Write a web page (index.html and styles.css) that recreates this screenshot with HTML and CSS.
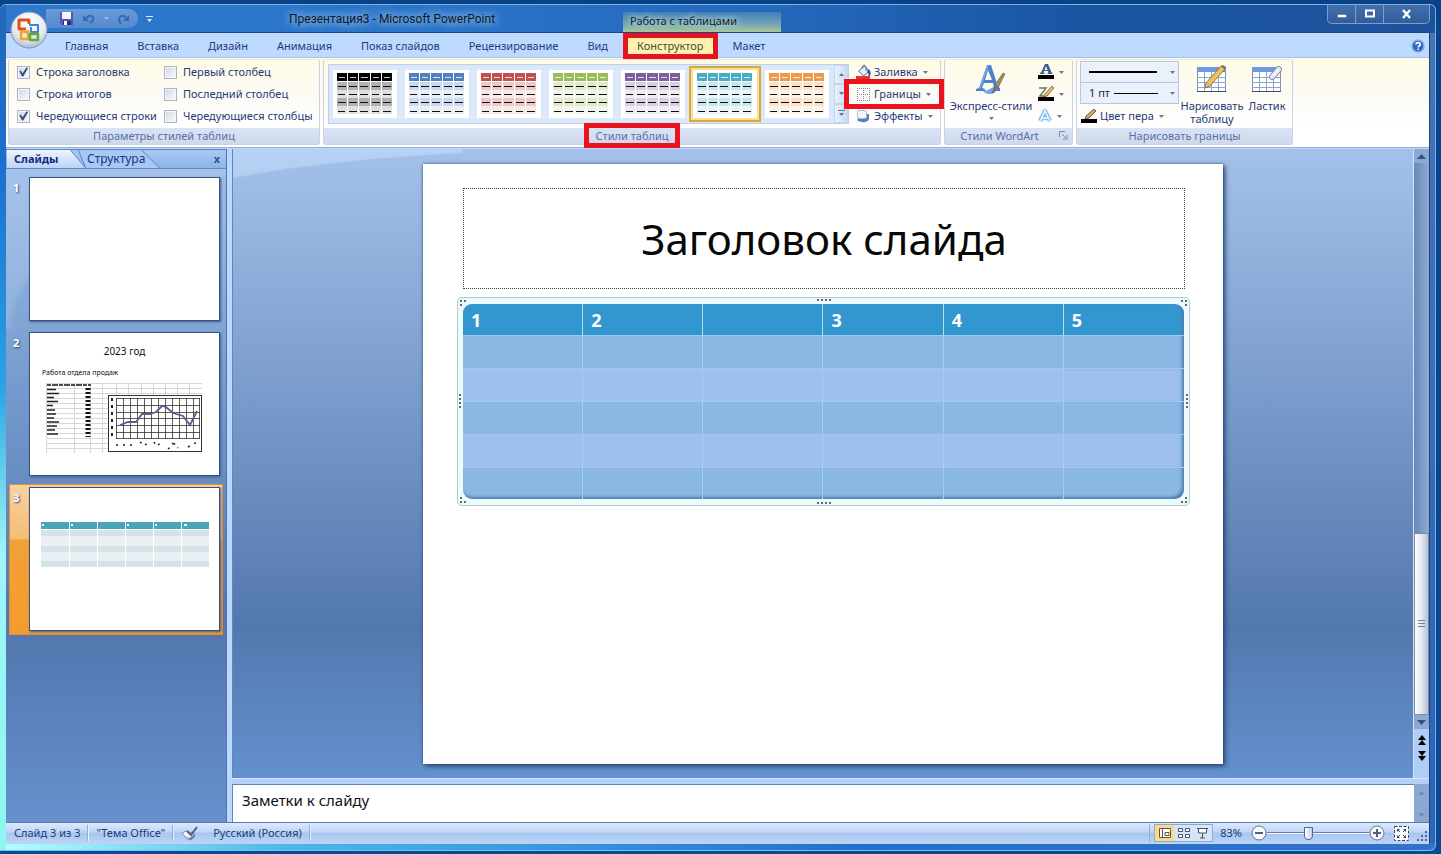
FILE: index.html
```html
<!DOCTYPE html>
<html lang="ru">
<head>
<meta charset="utf-8">
<title>Презентация3 - Microsoft PowerPoint</title>
<link rel="stylesheet" href="styles.css">
</head>
<body>
<svg class="defs" aria-hidden="true">
  <symbol id="table-style" viewBox="0 0 64 48">
    <g fill="currentColor">
      <path d="M4 3h10v8H4zM15 3h10v8H15zM26 3h11v8H26zM38 3h10v8H38zM49 3h10v8H49z"/>
      <path opacity=".3" d="M4 12h10v8H4zM15 12h10v8H15zM26 12h11v8H26zM38 12h10v8H38zM49 12h10v8H49zM4 28h10v8H4zM15 28h10v8H15zM26 28h11v8H26zM38 28h10v8H38zM49 28h10v8H49z"/>
      <path opacity=".12" d="M4 20h10v8H4zM15 20h10v8H15zM26 20h11v8H26zM38 20h10v8H38zM49 20h10v8H49zM4 36h10v8H4zM15 36h10v8H15zM26 36h11v8H26zM38 36h10v8H38zM49 36h10v8H49z"/>
    </g>
    <path stroke="#fff" stroke-opacity=".8" d="M6 7.500h6M17 7.500h6M28 7.500h7M40 7.500h6M51 7.500h6"/>
    <path stroke="#111" d="M5 16.500h8M16 16.500h8M27 16.500h8M39 16.500h8M50 16.500h8M5 24.500h7M16 24.500h8M27 24.500h8M39 24.500h7M50 24.500h8M5 32.500h8M16 32.500h8M27 32.500h8M39 32.500h8M50 32.500h8M5 41.500h7M16 41.500h8M27 41.500h8M39 41.500h7M50 41.500h8"/>
  </symbol>
  <symbol id="caret" viewBox="0 0 5 3"><path fill="currentColor" d="M0 0h5L2.500 3z"/></symbol>
  <symbol id="sheet" viewBox="0 0 32 32">
    <rect x="1.500" y="3.500" width="28" height="24" fill="#fff" stroke="#7c93b8"/>
    <path fill="#6c9be0" d="M1 3h29v5H1z"/>
    <path stroke="#8fa6cc" fill="none" d="M8.500 8v19M15.500 8v19M22.500 8v19M1 13.500h29M1 18.500h29M1 23.500h29"/>
    <path stroke="#3a4c70" d="M1 27.500h29"/>
  </symbol>
</svg>

<div class="window">
  <header class="titlebar">
    <div class="quick">
      <button class="tool" aria-label="Сохранить"><svg width="15" height="15" viewBox="0 0 15 15"><path fill="#5a55b5" d="M1 1h13v13H3l-2-2z"/><path fill="#f4f6ff" d="M3 1h9v7H3z"/><path fill="#2d2a80" d="M4 10h8v4H4z"/><path fill="#fff" d="M5 10h3v4H5z"/></svg></button>
      <button class="tool undo" aria-label="Отменить"><svg width="14" height="12" viewBox="0 0 14 12"><path fill="none" stroke="#3468bc" stroke-width="2" d="M3 6l4-3c4-1 5 2 4 4-1 2-2 2-3 3"/><path fill="#3468bc" d="M1 2v6h6z"/></svg></button>
      <svg class="dim" width="5" height="3"><use href="#caret"/></svg>
      <button class="tool redo" aria-label="Повторить"><svg width="14" height="12" viewBox="0 0 14 12"><path fill="none" stroke="#3468bc" stroke-width="2" d="M4 11c-4-5-1-9 3-8l3 3"/><path fill="#3468bc" d="M12 2v6H6z"/></svg></button>
    </div>
    <button class="tool more" aria-label="Настройка панели"><svg width="7" height="6" viewBox="0 0 7 6"><path fill="#dfeafb" d="M0 0h7v1H0zM1 3h5L3.500 6z"/></svg></button>
    <h1 class="app-title">Презентация3 - Microsoft PowerPoint</h1>
    <div class="context">Работа с таблицами</div>
    <div class="controls">
      <button aria-label="Свернуть"><svg width="12" height="10" viewBox="0 0 12 10"><rect x="1.500" y="5.500" width="9" height="3" fill="#fff" stroke="#52658a" stroke-width=".5"/></svg></button>
      <button aria-label="Развернуть"><svg width="12" height="10" viewBox="0 0 12 10"><rect x="2" y="1.500" width="8" height="6" fill="none" stroke="#fff" stroke-width="2"/></svg></button>
      <button class="close" aria-label="Закрыть"><svg width="12" height="10" viewBox="0 0 12 10"><path stroke="#fff" stroke-width="2.400" d="M2 1l7 8M9 1L2 9"/></svg></button>
    </div>
    <button class="office" aria-label="Кнопка Office"><svg width="38" height="38" viewBox="0 0 38 38">
      <defs><radialGradient id="orb" cx=".5" cy=".3" r=".8"><stop offset="0" stop-color="#fff"/><stop offset=".6" stop-color="#e4e8f0"/><stop offset="1" stop-color="#8fa2c4"/></radialGradient></defs>
      <circle cx="19" cy="19" r="18" fill="url(#orb)" stroke="#7d95bf"/>
      <g fill="none" stroke-linejoin="round">
        <path stroke="#d9531e" stroke-width="3" d="M16 18H9V9h10v4"/>
        <path stroke="#3f86d4" stroke-width="2" d="M19 14h9v7h-7v-5"/>
        <path stroke="#f0a52a" stroke-width="2.500" d="M17 21h-6v7h7v-9"/>
        <path stroke="#63a83a" stroke-width="2.500" d="M20 23h8v6h-8z"/>
      </g></svg></button>
  </header>

  <div class="client">
    <nav class="tabs">
      <a href="#">Главная</a><a href="#">Вставка</a><a href="#">Дизайн</a><a href="#">Анимация</a><a href="#">Показ слайдов</a><a href="#">Рецензирование</a><a href="#">Вид</a><a href="#" class="current marked">Конструктор</a><a href="#" class="last">Макет</a>
      <button class="tool help" aria-label="Справка"><svg width="14" height="14" viewBox="0 0 14 14"><circle cx="7" cy="7" r="6" fill="#2f68c4" stroke="#88aee4" stroke-width="1.500"/><path fill="none" stroke="#fff" stroke-width="1.600" d="M5 5.500C5 3 9.500 3 9.300 5.500 9 7 7.300 6.500 7.200 8.500M7.200 9.500v1.500"/></svg></button>
    </nav>

    <div class="ribbon">
      <section class="group options">
        <div class="checks">
          <label><input type="checkbox" checked>Строка заголовка</label><label><input type="checkbox">Первый столбец</label>
          <label><input type="checkbox">Строка итогов</label><label><input type="checkbox">Последний столбец</label>
          <label><input type="checkbox" checked>Чередующиеся строки</label><label><input type="checkbox">Чередующиеся столбцы</label>
        </div>
        <h2>Параметры стилей таблиц</h2>
      </section>

      <section class="group styles">
        <div class="group-body">
          <div class="gallery">
            <button class="swatch black" aria-label="Чёрный"><svg><use href="#table-style"/></svg></button>
            <button class="swatch blue" aria-label="Синий"><svg><use href="#table-style"/></svg></button>
            <button class="swatch red" aria-label="Красный"><svg><use href="#table-style"/></svg></button>
            <button class="swatch green" aria-label="Зелёный"><svg><use href="#table-style"/></svg></button>
            <button class="swatch purple" aria-label="Фиолетовый"><svg><use href="#table-style"/></svg></button>
            <button class="swatch teal chosen" aria-label="Бирюзовый"><svg><use href="#table-style"/></svg></button>
            <button class="swatch orange" aria-label="Оранжевый"><svg><use href="#table-style"/></svg></button>
            <div class="gallery-nav">
              <button aria-label="Вверх"><svg width="5" height="3" viewBox="0 0 5 3"><path fill="currentColor" d="M0 3h5L2.500 0z"/></svg></button>
              <button aria-label="Вниз"><svg width="5" height="3"><use href="#caret"/></svg></button>
              <button aria-label="Ещё"><svg width="7" height="6" viewBox="0 0 7 6"><path fill="currentColor" d="M0 0h7v1H0zM1 3h5L3.500 6z"/></svg></button>
            </div>
          </div>
          <div class="menu-list">
            <button class="item"><svg width="17" height="16" viewBox="0 0 17 16"><path fill="#e8edf6" stroke="#55698f" d="M3.500 7l6-5 5 5-6 5z"/><path fill="none" stroke="#55698f" d="M7 5c0-5 4-5 4-1v3"/><path fill="#2d5fa8" d="M13 5c4 2 3 6 1 8-1-2 0-4-2-5z"/><path fill="#e0352b" d="M1 12h14v3H1z"/></svg>Заливка<svg class="caret" width="5" height="3"><use href="#caret"/></svg></button>
            <button class="item marked borders"><svg width="17" height="16" viewBox="0 0 17 16"><path fill="none" stroke="#7c8aa3" stroke-dasharray="1 1" d="M2.500 2v12M8.500 2v12M14.500 2v12M2 2.500h13M2 8.500h13M2 14.500h13"/></svg>Границы<svg class="caret" width="5" height="3"><use href="#caret"/></svg></button>
            <button class="item"><svg width="17" height="16" viewBox="0 0 17 16"><path fill="#5c7fb4" d="M6 6h8v5c-1 4-9 4-12 1z"/><rect x="2.500" y="2.500" width="9" height="8" rx="2" fill="#f2f6fd" stroke="#a2b8da"/></svg>Эффекты<svg class="caret" width="5" height="3"><use href="#caret"/></svg></button>
          </div>
        </div>
        <h2><span class="marked">Стили таблиц</span></h2>
      </section>

      <section class="group wordart">
        <div class="group-body">
          <button class="big"><svg width="32" height="32" viewBox="0 0 32 32"><path fill="#4a80cc" d="M1 27v-2l3-1L12 1h4l7 22 2 1v3h-9v-2l3-1-1-5H9l-2 5 3 1v2zM10 16h7L13 6z"/><path fill="#7ba6e2" d="M12 1h2L6 24l-2 1zM8 27c4 5 12 4 15-4-4-2-7 3-15 4z"/><path fill="#a58a64" stroke="#74624a" stroke-width=".6" d="M28 9l2 1-7 14-4-2z"/><path fill="#6b7487" d="M20 20l4 3-5 6-3 1c2-2 2-7 4-10z"/></svg><span>Экспресс-стили</span><svg class="caret" width="5" height="3"><use href="#caret"/></svg></button>
          <div class="mini-list">
            <button class="item" aria-label="Заливка текста"><svg width="18" height="18" viewBox="0 0 18 18"><path fill="#3e5a94" d="M3 11v-1l1-.500L8 1h3l3.500 8.500 1 .500v1h-5v-1l1-.500-.600-1.500H7l-.500 1.500 1 .500v1zM7.500 7h3L9 3z"/><path d="M1 12h16v4H1z"/></svg><svg class="caret" width="5" height="3"><use href="#caret"/></svg></button>
            <button class="item" aria-label="Контур текста"><svg width="18" height="18" viewBox="0 0 18 18"><path fill="none" stroke="#6d7a57" stroke-width="1.500" d="M2 3h7L3 11h6"/><path fill="#e2c06d" stroke="#6b5936" stroke-width=".8" d="M15 1l2 2-7 8-4 1 2-3z"/><path d="M1 12h16v4H1z"/></svg><svg class="caret" width="5" height="3"><use href="#caret"/></svg></button>
            <button class="item" aria-label="Эффекты текста"><svg width="16" height="18" viewBox="0 0 16 18"><path fill="none" stroke="#b4dcf4" stroke-width="5" stroke-linejoin="round" d="M3 14L8 4l5 10M5 11h6"/><path fill="none" stroke="#6fb0de" stroke-width="3" stroke-linejoin="round" d="M3 14L8 4l5 10M5 11h6"/><path fill="none" stroke="#f0faff" stroke-width="1.500" d="M3 14L8 4l5 10M5 11h6"/></svg><svg class="caret" width="5" height="3"><use href="#caret"/></svg></button>
          </div>
        </div>
        <h2>Стили WordArt<svg class="launcher" width="9" height="9" viewBox="0 0 9 9"><path fill="none" stroke="#7389b8" d="M.500 6V.500H6M3 3l4 4M8 4v4H4"/></svg></h2>
      </section>

      <section class="group draw">
        <div class="group-body">
          <div class="pen">
            <div class="combo"><select class="line-style" aria-label="Стиль пера"><option aria-label="Сплошная"></option></select><svg class="caret" width="5" height="3"><use href="#caret"/></svg></div>
            <div class="combo"><select class="line-weight" aria-label="Толщина пера"><option>1 пт</option></select><svg class="caret" width="5" height="3"><use href="#caret"/></svg></div>
            <button class="item"><svg width="18" height="16" viewBox="0 0 18 16"><path fill="#d8a45c" stroke="#5a4630" stroke-width=".8" d="M14 1l2 2-7 7-4 1 1-3z"/><path d="M1 11h16v4H1z"/></svg>Цвет пера<svg class="caret" width="5" height="3"><use href="#caret"/></svg></button>
          </div>
          <button class="big table"><svg width="32" height="32" viewBox="0 0 32 32"><use href="#sheet"/><path fill="#efc15a" stroke="#7a6130" stroke-width=".8" d="M25 2l4 3-15 17-5 2 1-5z"/><path fill="#8a6a6c" d="M25 2l2-1 3 2-1 3z"/></svg><span>Нарисовать<br>таблицу</span></button>
          <button class="big"><svg width="32" height="32" viewBox="0 0 32 32"><use href="#sheet"/><path fill="#dfe7f5" stroke="#6f7f9e" d="M19 11l7-8c2-2 6 1 4 4l-7 8c-3 2-6-1-4-4z"/><path fill="#fff" d="M21 12l6-7 1 1-6 7z"/></svg><span>Ластик</span></button>
        </div>
        <h2>Нарисовать границы</h2>
      </section>
    </div>

    <main class="workspace">
      <aside class="outline">
        <div class="outline-tabs">
          <svg class="tab-shape" width="155" height="20" viewBox="0 0 155 20"><defs><linearGradient id="tabfill" x2="0" y2="1"><stop offset="0" stop-color="#f0f6ff"/><stop offset="1" stop-color="#b9d3f7"/></linearGradient></defs><path fill="#a9c8f3" stroke="#5f86bd" d="M72 .500h63L154 19.500H80z"/><path fill="url(#tabfill)" stroke="#5f86bd" d="M0 .500h64l16 19H0z"/></svg>
          <button class="active">Слайды</button><button>Структура</button><button class="close-pane" aria-label="Закрыть">x</button>
        </div>
        <ol class="thumbs">
          <li><span class="num">1</span><div class="thumb"></div></li>
          <li><span class="num">2</span><div class="thumb report"><h3>2023 год</h3><p>Работа отдела продаж</p>
            <svg width="158" height="72" viewBox="0 0 158 72">
              <path fill="none" stroke="#d3d7de" d="M.500 1v70M28.500 1v70M44.500 1v70M56.500 1v70M70.500 1v12M82.500 1v12M95.500 1v12M107.500 1v12M119.500 1v12M131.500 1v12M143.500 1v12M0 1.500h156M0 6.500h156M0 11.500h156M0 16.500h62M0 21.500h62M0 26.500h62M0 31.500h62M0 36.500h62M0 41.500h62M0 46.500h62M0 51.500h62M0 56.500h62M0 61.500h62M0 66.500h62"/>
              <path stroke="#111" stroke-width="1.500" stroke-dasharray="4 1 6 1" d="M1 3h44"/>
              <path stroke="#222" stroke-width="1.500" d="M1 7.500h9M1 11.500h12M1 15.500h7M1 19.500h11M1 23.500h6M1 28h8M1 32h9M1 36h7M1 40h12M1 44h10M1 48h8M1 52h11"/>
              <path stroke="#111" stroke-width="5" stroke-dasharray="2 2" d="M42 6v49"/>
              <rect x="62.500" y="13.500" width="93" height="56" fill="#fff" stroke="#333"/>
              <path fill="none" stroke="#333" stroke-width=".8" d="M70.500 16v41M77.500 16v41M84.500 16v41M91.500 16v41M98.500 16v41M105.500 16v41M112.500 16v41M119.500 16v41M126.500 16v41M133.500 16v41M140.500 16v41M147.500 16v41M153.500 16v41M70 16.500h84M70 23.500h84M70 30.500h84M70 36.500h84M70 43.500h84M70 50.500h84M70 56.500h84"/>
              <path fill="none" stroke="#64578c" stroke-width="1.800" d="M74 43l8-3h8l6-8h8l6-2 6-6 4 1 7 6 10 3 7 9 7-14"/>
              <path stroke="#222" stroke-width="2" stroke-dasharray="3 4" d="M66 16v42"/>
              <path fill="none" stroke="#222" stroke-width="1.500" stroke-dasharray="2 5" d="M70 63h18M94 60l4 3M99 63l3-2M108 60l2 4M112 63l3-2M122 67l10-8M126 61l6 5M142 65l9-5"/>
            </svg></div></li>
          <li class="selected"><span class="num">3</span><div class="thumb mini">
            <svg width="168" height="46" viewBox="0 0 168 46"><path fill="#4ba5b9" d="M0 0h168v7H0z"/><path fill="#d3e3e8" d="M0 8h168v6H0zM0 24h168v6H0zM0 39h168v6H0z"/><path fill="#e9f0f4" d="M0 14h168v10H0zM0 30h168v9H0z"/><path stroke="#fff" d="M28.500 0v46M56.500 0v46M84.500 0v46M112.500 0v46M140.500 0v46"/><path stroke="#e8ffff" stroke-width="2" d="M1 3h2M30 3h2M86 3h2M114 3h2M143 3h3"/></svg></div></li>
        </ol>
      </aside>

      <div class="editor">
        <div class="canvas-row">
          <div class="stage">
            <article class="slide">
              <h2 class="placeholder">Заголовок слайда</h2>
              <div class="frame">
                <table>
                  <thead><tr><th>1</th><th>2</th><th></th><th>3</th><th>4</th><th>5</th></tr></thead>
                  <tbody>
                    <tr><td></td><td></td><td></td><td></td><td></td><td></td></tr>
                    <tr><td></td><td></td><td></td><td></td><td></td><td></td></tr>
                    <tr><td></td><td></td><td></td><td></td><td></td><td></td></tr>
                    <tr><td></td><td></td><td></td><td></td><td></td><td></td></tr>
                    <tr><td></td><td></td><td></td><td></td><td></td><td></td></tr>
                  </tbody>
                </table>
                <i class="grip n"></i><i class="grip s"></i><i class="grip w"></i><i class="grip e"></i>
                <i class="corner nw"></i><i class="corner ne"></i><i class="corner sw"></i><i class="corner se"></i>
              </div>
            </article>
          </div>
          <div class="scroll">
            <button aria-label="Вверх"><svg width="9" height="5" viewBox="0 0 9 5"><path fill="currentColor" d="M0 5h9L4.500 0z"/></svg></button>
            <div class="track"><div class="knob"></div></div>
            <button aria-label="Вниз"><svg width="9" height="5" viewBox="0 0 9 5"><path fill="currentColor" d="M0 0h9L4.500 5z"/></svg></button>
            <div class="jumps">
              <button aria-label="Предыдущий слайд"><svg width="8" height="10" viewBox="0 0 8 10"><path d="M0 5h8L4 0zM0 10h8L4 5z"/></svg></button>
              <button aria-label="Следующий слайд"><svg width="8" height="10" viewBox="0 0 8 10"><path d="M0 0h8L4 5zM0 5h8l-4 5z"/></svg></button>
            </div>
          </div>
        </div>
        <div class="notes-row">
          <textarea class="notes" aria-label="Заметки">Заметки к слайду</textarea>
          <div class="notes-scroll"><svg width="7" height="4" viewBox="0 0 7 4"><path fill="currentColor" d="M0 4h7L3.500 0z"/></svg><svg width="7" height="4" viewBox="0 0 7 4"><path fill="currentColor" d="M0 0h7L3.500 4z"/></svg></div>
        </div>
      </div>
    </main>

    <footer class="status">
      <span class="cell">Слайд 3 из 3</span><span class="cell">"Тема Office"</span>
      <span class="cell language"><svg width="18" height="16" viewBox="0 0 18 16"><path fill="#f4f7fc" stroke="#7d8dab" d="M1 8l4-2 4 2 3-1 2 4-4 4-4-1z"/><path fill="#6a7da3" d="M4 11l6 4 4-4-1-2-4 4z"/><path fill="none" stroke="#4a5f8d" stroke-width="2" d="M6 6l4 4 6-8"/></svg>Русский (Россия)</span>
      <div class="zoom">
        <div class="views">
          <button class="on" aria-label="Обычный"><svg width="13" height="12" viewBox="0 0 13 12"><path fill="#fff" stroke="#62553b" d="M1.500 1.500h11v9h-11zM4.500 2v9M7 5.500h4v3H7z"/></svg></button>
          <button aria-label="Сортировщик слайдов"><svg width="12" height="12" viewBox="0 0 12 12"><path fill="#fff" stroke="#44506b" d="M.500 1.500h4v3h-4zM7.500 1.500h4v3h-4zM.500 7.500h4v3h-4zM7.500 7.500h4v3h-4z"/></svg></button>
          <button aria-label="Показ слайдов"><svg width="13" height="12" viewBox="0 0 13 12"><path fill="#fff" stroke="#44506b" d="M1 1.500h11M2.500 2v4h8V2M6.500 6v5M4 11h5"/></svg></button>
        </div>
        <span class="percent">83%</span>
        <button class="tool" aria-label="Уменьшить"><svg width="16" height="16" viewBox="0 0 16 16"><circle cx="8" cy="8" r="7" fill="#f6f9ff" stroke="#62738f"/><path stroke="#52617c" stroke-width="2" d="M4 8h8"/></svg></button>
        <input type="range" min="0" max="100" value="40" aria-label="Масштаб">
        <button class="tool" aria-label="Увеличить"><svg width="16" height="16" viewBox="0 0 16 16"><circle cx="8" cy="8" r="7" fill="#f6f9ff" stroke="#62738f"/><path stroke="#52617c" stroke-width="2" d="M4 8h8M8 4v8"/></svg></button>
        <button class="tool fit" aria-label="Вписать"><svg width="15" height="15" viewBox="0 0 15 15"><rect width="15" height="15" fill="#fbfdff"/><path fill="none" stroke="#3c475e" stroke-dasharray="3 1.500" d="M.500.500h14v14H.500z"/><path fill="#3c475e" d="M3 3h3L3 6zM12 3v3L9 3zM3 12V9l3 3zM12 12H9l3-3z"/><path stroke="#3c475e" d="M4 4l2 2M11 4L9 6M4 11l2-2M11 11L9 9"/></svg></button>
        <svg class="resize" width="11" height="11" viewBox="0 0 11 11"><path fill="#4a67a0" d="M8 0h2v2H8zM4 4h2v2H4zM8 4h2v2H8zM0 8h2v2H0zM4 8h2v2H4zM8 8h2v2H8z"/></svg>
      </div>
    </footer>
  </div>
</div>
</body>
</html>
```
FILE: styles.css
```css
* { box-sizing: border-box; }
body {
  margin: 0;
  height: 100vh;
  display: flex;
  padding: 4px 5px 3px 0;
  background: linear-gradient(#0a4288, #0b4a92);
  font: 11px/16px "Noto Sans", "Open Sans", sans-serif;
  color: #1e3a78;
}
button {
  display: flex;
  align-items: center;
  justify-content: center;
  margin: 0;
  padding: 0;
  border: 0;
  background: none;
  font: inherit;
  color: inherit;
}
h1, h2, h3, p, ol { margin: 0; padding: 0; font-weight: normal; }
a { color: inherit; text-decoration: none; }
svg { flex: none; display: block; }
.defs { position: absolute; width: 0; height: 0; }
.caret { color: #6f7788; }

.window {
  flex: 1;
  min-width: 0;
  display: flex;
  flex-direction: column;
  padding: 0 5px 6px 6px;
  border-top: 1px solid #7fb0e6;
  border-right: 1px solid #6fb4ef;
  border-bottom: 1px solid #6fc4ef;
  border-radius: 6px 6px 6px 0;
  background:
    linear-gradient(#2468b8, #1c6fd0 20%, #2aa3e4 45%, #9ff6f6 65%, #8df7f0) left / 6px 100% no-repeat,
    linear-gradient(90deg, #b4ffff, #4fb6e8 20%, #2170cc 60%, #3272c8) bottom / 100% 7px no-repeat,
    linear-gradient(90deg, #2f79cc, #2a74c8 30%, #2467bb 55%, #1a55a2 75%, #1d539c) top / 100% 28px no-repeat,
    linear-gradient(#4a74b0, #2c64b8);
}

/* Title bar */
.titlebar {
  position: relative;
  flex: none;
  display: grid;
  grid-template-columns: 132px 145px 334px 158px 1fr;
  height: 27px;
}
.quick {
  display: flex;
  align-items: center;
  gap: 8px;
  margin: 4px 0 4px 40px;
  padding-left: 13px;
  border-radius: 0 10px 10px 0;
  background: linear-gradient(#6a9bd9, #5489cc);
}
.dim { color: #9bbdec; }
.more { justify-self: start; margin-left: 8px; }
.app-title {
  margin: 4px 0 0 6px;
  font: 12px/20px Roboto, "Noto Sans", sans-serif;
  color: #101820;
  text-shadow: 0 0 8px #a8cbf2, 0 0 8px #a8cbf2;
}
.context {
  margin: 7px 0 0 6px;
  padding-left: 7px;
  width: 158px;
  line-height: 18px;
  background: linear-gradient(#3f7fba, #73a5b4 60%, #a9c79a);
  color: #10202c;
  text-shadow: 0 0 6px #c8e4e4, 0 0 6px #c8e4e4;
}
.controls {
  justify-self: end;
  display: flex;
  height: 19px;
  border: 1px solid #7f9dca;
  border-top: 0;
  border-radius: 0 0 5px 5px;
  background: linear-gradient(#4570ab, #2f5c9c);
}
.controls button { width: 28px; border-right: 1px solid #7f9dca; }
.controls .close { width: 45px; border: 0; }
.office { position: absolute; left: 4px; top: 6px; z-index: 2; }

/* Ribbon */
.client {
  flex: 1;
  min-height: 0;
  display: flex;
  flex-direction: column;
  border-top: 1px solid #1b4580;
  border-right: 1px solid #1b4580;
  background: #bdd8fe;
}
.tabs {
  flex: none;
  display: flex;
  align-items: center;
  gap: 29px;
  height: 25px;
  padding: 1px 4px 0 59px;
  background: #bfdaff;
  border-bottom: 1px solid #a3bfe4;
}
.tabs .current { color: #4e4a3a; isolation: isolate; }
.tabs .current::before {
  content: "";
  position: absolute;
  z-index: -1;
  inset: -1px -9px;
  background: #fdf2b0;
}
.help { margin-left: auto; }
.marked { position: relative; }
.marked::after {
  content: "";
  position: absolute;
  z-index: 3;
  border: 5px solid #e8131f;
  pointer-events: none;
}
.tabs .marked::after { inset: -5px -14px; }
.borders.marked::after { inset: -4px -11px; }
h2 .marked::after { inset: -5px -12px; }

.ribbon {
  flex: none;
  display: flex;
  gap: 3px;
  padding: 1px 3px 2px 2px;
  background: linear-gradient(#fffbe6, #fcfaf4 40%, #fff 75%);
  border-bottom: 1px solid #8fafdc;
}
.group {
  display: flex;
  flex-direction: column;
  border: 1px solid #c9d3e4;
  border-top-color: #e9e6dc;
  border-radius: 3px;
}
.group-body { flex: 1; display: flex; }
.group > h2 {
  position: relative;
  margin-top: auto;
  height: 16px;
  background: linear-gradient(#d8e3f5, #d0d9e9);
  text-align: center;
  font-size: 11px;
  line-height: 16px;
  color: #5670a8;
}
.options { width: 312px; }
.styles { width: 618px; }
.wordart { width: 129px; }
.draw { width: 217px; }
.checks {
  display: grid;
  grid-template-columns: 147px 1fr;
  grid-auto-rows: 22px;
  padding: 1px 0 1px 8px;
}
.checks label { display: flex; align-items: center; gap: 6px; white-space: nowrap; }
.checks input {
  appearance: none;
  flex: none;
  width: 13px;
  height: 13px;
  margin: 0;
  border: 1px solid #a9b5c9;
  background: linear-gradient(135deg, #cfd6e0, #fbfcff);
  box-shadow: inset 0 0 0 1px #f2f5fa;
}
.checks input:checked::before {
  content: "";
  display: block;
  width: 11px;
  height: 11px;
  background: #3b4f82;
  clip-path: polygon(12% 42%, 28% 38%, 42% 62%, 76% 8%, 92% 14%, 48% 92%, 36% 92%);
}
.gallery {
  display: flex;
  align-items: flex-start;
  gap: 8px;
  margin: 4px 0 0 4px;
  padding: 5px 0 0 4px;
  width: 521px;
  height: 60px;
  border: 1px solid #bccfe9;
  background: #dbe8f9;
}
.swatch { width: 64px; height: 48px; background: #fff; }
.swatch svg { width: 64px; height: 48px; }
.black { color: #000; }
.blue { color: #4f81bd; }
.red { color: #c0504d; }
.green { color: #9bbb59; }
.purple { color: #7a5f9e; }
.teal { color: #4bacc6; }
.orange { color: #ee9a4d; }
.chosen { box-shadow: 0 0 0 2px #fbe08a, 0 0 0 4px #d8a746; }
.gallery-nav {
  align-self: stretch;
  display: grid;
  grid-template-rows: repeat(3, 1fr);
  width: 16px;
  margin: -5px 0 0 -3px;
}
.gallery-nav button { border: 1px solid #c4d5ee; background: linear-gradient(90deg, #eaf2fd, #c9dbf4); color: #60719a; }
.menu-list { display: flex; flex-direction: column; padding: 1px 0 0 6px; }
.item { justify-content: flex-start; gap: 2px; height: 22px; white-space: nowrap; }
.item .caret { margin-left: 3px; }
.big { flex-direction: column; justify-content: flex-start; line-height: 13px; }
.wordart .big { width: 92px; padding-top: 4px; }
.big span { margin-top: 3px; white-space: nowrap; }
.wordart .big .caret { margin-top: 5px; }
.mini-list { padding-top: 1px; }
.mini-list .item { gap: 1px; }
.launcher { position: absolute; right: 4px; top: 3px; }
.wordart h2 { padding-right: 18px; }
.pen { width: 103px; padding: 1px 0 0 3px; }
.pen .item { margin-top: 2px; }
.combo { position: relative; margin-bottom: -1px; }
.combo .caret { position: absolute; right: 5px; top: 10px; }
.combo select {
  appearance: none;
  display: block;
  width: 99px;
  height: 22px;
  margin: 0;
  padding: 0 8px;
  border: 1px solid #b4c8e6;
  border-radius: 0;
  background: #eaf1fb;
  font: inherit;
  color: #1c2844;
}
.combo .line-style { background: linear-gradient(#000, #000) 8px 9px / 68px 2px no-repeat #eaf1fb; }
.combo .line-weight { background: linear-gradient(#000, #000) 33px 10px / 44px 1px no-repeat #eaf1fb; }
.draw .big { width: 46px; padding-top: 4px; }
.draw .table { width: 64px; }

/* Work area */
.workspace { flex: 1; display: flex; min-height: 0; padding-top: 1px; }
.outline {
  flex: none;
  width: 221px;
  border-right: 1px solid #4f76ad;
  background:
    radial-gradient(ellipse 200% 100% at 200% 100%, transparent 98%, rgba(190, 216, 248, .25)) top / 100% 180px no-repeat,
    linear-gradient(#a0bfe8, #7298cc 38%, #5277ad 70%, #567cb5 78%, #6790cc);
}
.outline-tabs {
  position: relative;
  display: flex;
  align-items: center;
  height: 20px;
  background: linear-gradient(#a8c9f5, #8db4e8);
  border: solid #5f86bd;
  border-width: 1px 0;
  color: #15358a;
}
.tab-shape { position: absolute; left: 0; top: -1px; }
.outline-tabs button { position: relative; padding-left: 8px; font-size: 12px; }
.outline-tabs .active { width: 73px; justify-content: flex-start; font-weight: bold; color: #0f2a7a; font-size: 11px; }
.outline-tabs .close-pane { margin-left: auto; padding-right: 6px; color: #2f5596; font-weight: bold; font-size: 11px; }
.thumbs {
  display: flex;
  flex-direction: column;
  gap: 4px;
  padding: 5px 3px 0;
  list-style: none;
}
.thumbs li { display: flex; height: 151px; padding: 3px 3px 4px 4px; }
.thumbs .selected {
  padding: 2px 2px 3px 3px;
  border: 1px solid #e98c30;
  background: linear-gradient(#f9d2a2, #f4bd74 36%, #f2a136 37%, #f19c30);
}
.num { width: 16px; padding-top: 3px; font-weight: bold; color: #fff; text-shadow: 1px 1px 2px #24477c; }
.thumb {
  flex: 1;
  border: 1px solid #3c5377;
  background: #fff;
  box-shadow: 1px 1px 2px #3f5f92;
  color: #111;
}
.report { padding: 10px 0 0 12px; }
.report h3 { margin-left: -12px; text-align: center; font-size: 10px; line-height: 16px; }
.report p { margin-top: 9px; font-size: 7px; line-height: 10px; }
.report svg { margin: 4px 0 0 4px; }
.mini { padding: 34px 0 0 11px; }

.editor { flex: 1; display: flex; flex-direction: column; min-width: 0; margin-left: 5px; }
.canvas-row { flex: 1; display: flex; min-height: 0; border-left: 1px solid #5f86bd; }
.stage {
  flex: 1;
  min-width: 0;
  display: flex;
  justify-content: center;
  align-items: center;
  background:
    radial-gradient(ellipse 200% 100% at 160% 100%, transparent 98%, rgba(200, 224, 252, .5)) 0 0 / 230px 70px no-repeat,
    linear-gradient(#a3c1ea, #5378ae 76%, #6490cd);
}
.slide {
  flex: 0 0 800px;
  aspect-ratio: 4 / 3;
  padding: 24px 33px 0 34px;
  background: #fff;
  box-shadow: 2px 2px 5px #24446f, 0 0 2px #3c5d90;
}
.placeholder {
  margin: 0 5px 0 6px;
  padding: 20px 0 19px;
  border: 1px dotted #444;
  font-size: 42px;
  line-height: 60px;
  text-align: center;
  color: #080808;
}
.frame {
  position: relative;
  margin-top: 8px;
  padding: 6px 5px 6px 5px;
  border: 1px solid #a9cfca;
  border-radius: 5px;
  background: #edfafc;
}
.frame table {
  width: 100%;
  table-layout: fixed;
  border-collapse: separate;
  border-spacing: 0;
  border-radius: 9px;
  overflow: hidden;
  background: #9ac1ec;
}
.frame th, .frame td { padding: 0 8px; border-right: 1px solid #a4cdf0; border-bottom: 1px solid #a0c8f2; }
.frame th { height: 32px; padding-top: 2px; background: #3397cf; border-right-color: #b3e0f8; text-align: left; font-size: 18px; line-height: 24px; font-weight: bold; color: #fff; }
.frame td { height: 33px; background: #9dc0ed; }
.frame tr > :last-child { border-right: 0; box-shadow: inset -4px 0 3px -2px #4b7fb0; }
.frame tbody tr:nth-child(odd) td { background: #8ab8e3; }
.frame tbody tr:last-child td { border-bottom: 0; height: 31px; box-shadow: inset 0 -4px 3px -2px #4b7fb0; }
.frame tbody tr:last-child td:first-child { border-bottom-left-radius: 9px; }
.frame tbody tr:last-child td:last-child { border-bottom-right-radius: 9px; box-shadow: inset -4px -4px 3px -2px #4b7fb0; }
.frame th:last-child { border-top-right-radius: 9px; }
.grip, .corner { position: absolute; background: repeating-linear-gradient(90deg, #667 0 2px, transparent 2px 4px); }
.grip.n, .grip.s { width: 14px; height: 2px; left: calc(50% - 7px); }
.grip.n { top: 1px; }
.grip.s { bottom: 1px; }
.grip.w, .grip.e { width: 2px; height: 14px; top: calc(50% - 7px); background: repeating-linear-gradient(#667 0 2px, transparent 2px 4px); }
.grip.w { left: 1px; }
.grip.e { right: 1px; }
.corner { width: 6px; height: 2px; }
.corner::after { content: ""; position: absolute; left: 0; top: 4px; width: 2px; height: 2px; background: #667; }
.corner.nw { left: 2px; top: 2px; }
.corner.ne { right: 2px; top: 2px; }
.corner.ne::after { left: 4px; }
.corner.sw { left: 2px; bottom: 2px; }
.corner.se { right: 2px; bottom: 2px; }
.corner.sw::after, .corner.se::after { top: -4px; }
.corner.se::after { left: 4px; }

.scroll { flex: none; display: flex; flex-direction: column; width: 16px; border-left: 1px solid #d2e4fc; background: #7f9ecb; color: #34517f; }
.scroll > button { height: 14px; background: #8ba9d3; }
.track { flex: 1; display: flex; align-items: flex-end; background: linear-gradient(90deg, #6787b6, #8eabd5); }
.knob {
  width: 100%;
  height: 33%;
  border: 1px solid #7b8aa6;
  background:
    repeating-linear-gradient(#7b8492 0 1px, transparent 1px 3px) center / 7px 8px no-repeat,
    linear-gradient(90deg, #fff, #e3e8f1 50%, #b6c2d6);
}
.jumps { display: flex; flex-direction: column; align-items: center; gap: 6px; height: 49px; padding-top: 6px; background: #b0cdf5; }
.notes-row { flex: none; display: flex; height: 44px; padding-top: 5px; border-top: 1px solid #d4e6fd; background: #b3d1f8; }
.notes {
  flex: 1;
  padding: 5px 9px;
  border: 1px solid #6285b8;
  border-width: 1px 0 0 1px;
  background: #fff;
  resize: none;
  outline: 0;
  font: 15px/20px "Noto Sans", "Open Sans", sans-serif;
  color: #111;
  overflow: hidden;
}
.notes-scroll { display: flex; flex-direction: column; justify-content: space-between; align-items: center; width: 15px; padding: 7px 0 5px; background: #8aa8d2; color: #6f8cb8; }

/* Status bar */
.status {
  flex: none;
  display: flex;
  align-items: center;
  height: 22px;
  padding-bottom: 1px;
  border-top: 1px solid #587cb3;
  background: linear-gradient(#dce9fb, #c2d7f5 40%, #a9c6ee 50%, #bcd5f7);
}
.cell { display: flex; align-items: center; gap: 14px; padding: 0 7px 0 8px; border-right: 1px solid #8fadd8; box-shadow: 1px 0 #e6f0fe; white-space: nowrap; }
.zoom { margin-left: auto; display: flex; align-items: center; padding: 0 1px 0 4px; border-left: 1px solid #8fadd8; }
.views { display: flex; border: 1px solid #8fa8ce; background: #d6e4f8; }
.views button { width: 19px; height: 16px; }
.views .on { background: #fbd98a; }
.percent { padding: 0 9px 0 7px; }
.zoom input {
  appearance: none;
  width: 102px;
  height: 14px;
  margin: 0;
  background: linear-gradient(#6480ac, #6480ac) 0 6px / 100% 1px no-repeat, linear-gradient(#f0f6ff, #f0f6ff) 0 7px / 100% 1px no-repeat;
}
.zoom input::-webkit-slider-thumb {
  appearance: none;
  width: 9px;
  height: 13px;
  border: 1px solid #52678e;
  border-radius: 1px 1px 5px 5px;
  background: linear-gradient(90deg, #fff, #c2d0e6);
}
.fit { margin-left: 9px; }
.resize { align-self: flex-end; margin-left: 8px; }
```
